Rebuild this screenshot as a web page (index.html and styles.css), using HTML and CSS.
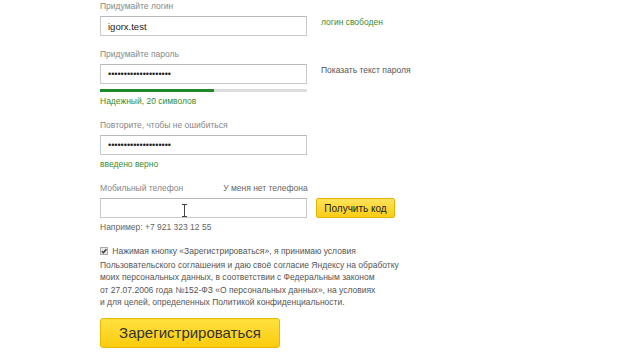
FILE: index.html
```html
<!DOCTYPE html>
<html lang="ru">
<head>
    <meta charset="UTF-8">
    <meta name="viewport" content="width=device-width, initial-scale=1.0">
    <title>Регистрация</title>
    <link rel="stylesheet" href="styles.css">
</head>
<body>
    <div class="form">
        <div class="field">
            <label class="label">Придумайте логин</label>
            <div class="row">
                <div class="input"><span class="value">igorx.test</span></div>
                <span class="side ok">логин свободен</span>
            </div>
        </div>

        <div class="field">
            <label class="label">Придумайте пароль</label>
            <div class="row">
                <div class="input"><span class="dots">••••••••••••••••••••</span></div>
                <span class="side">Показать текст пароля</span>
            </div>
            <div class="strength"><div class="strength-fill"></div></div>
            <p class="hint ok">Надежный, 20 символов</p>
        </div>

        <div class="field">
            <label class="label">Повторите, чтобы не ошибиться</label>
            <div class="row">
                <div class="input"><span class="dots">••••••••••••••••••••</span></div>
            </div>
            <p class="hint ok">введено верно</p>
        </div>

        <div class="field">
            <div class="label-row">
                <label class="label">Мобильный телефон</label>
                <span class="label no-phone">У меня нет телефона</span>
            </div>
            <div class="row">
                <div class="input phone">
                    <svg class="cursor" width="7" height="13" viewBox="0 0 7 13">
                        <path d="M1 0.5h5M1 12.5h5M3.5 0.5v12" stroke="#444" stroke-width="1" fill="none"/>
                    </svg>
                </div>
                <button class="btn-code">Получить код</button>
            </div>
            <p class="hint example">Например: +7 921 323 12 55</p>
        </div>

        <p class="agree">
            <span class="check">
                <svg width="8" height="8" viewBox="0 0 8 8">
                    <rect x="0.5" y="0.5" width="7" height="7" fill="#e9e9e9" stroke="#aaa"/>
                    <path d="M1.8 4.2l1.6 1.6 3-3.6" stroke="#333" stroke-width="1.4" fill="none"/>
                </svg>
            </span>
            Нажимая кнопку «Зарегистрироваться», я принимаю условия<br>
            Пользовательского соглашения и даю своё согласие Яндексу на обработку<br>
            моих персональных данных, в соответствии с Федеральным законом<br>
            от 27.07.2006 года №152-ФЗ «О персональных данных», на условиях<br>
            и для целей, определенных Политикой конфиденциальности.
        </p>

        <button class="btn-submit">Зарегистрироваться</button>
    </div>
</body>
</html>
```

FILE: styles.css
```css
* {
    margin: 0;
    padding: 0;
    box-sizing: border-box;
}

body {
    font-family: 'Liberation Sans', Arial, sans-serif;
    background-color: #fff;
    color: #333;
}

.form {
    padding-left: 100px;
}

.field {
    margin-bottom: 12px;
}

.label {
    display: block;
    font-size: 8.5px;
    line-height: 12px;
    color: #888;
    margin-bottom: 4px;
}

.label-row {
    display: flex;
}

.no-phone {
    margin-left: 40px;
    color: #666;
}

.row {
    display: flex;
    align-items: flex-start;
}

.input {
    position: relative;
    width: 207px;
    height: 20px;
    border: 1px solid #c9c9c9;
    border-top-color: #b8b8b8;
    background-color: #fff;
    display: flex;
    align-items: center;
    padding-left: 7px;
}

.value {
    font-size: 9.5px;
    color: #222;
}

.dots {
    font-size: 9px;
    color: #222;
}

.side {
    margin-left: 14px;
    font-size: 8.5px;
    line-height: 12px;
    color: #555;
}

.ok {
    color: #3d8b2f;
}

.strength {
    width: 207px;
    height: 3px;
    margin-top: 5px;
    background-color: #ddd;
}

.strength-fill {
    width: 55%;
    height: 100%;
    background-color: #1e8a2a;
}

.hint {
    font-size: 8.5px;
    line-height: 12px;
    margin-top: 3px;
}

.example {
    color: #666;
}

.cursor {
    position: absolute;
    left: 80px;
    top: 5px;
}

.btn-code {
    margin-left: 9px;
    width: 79px;
    height: 20px;
    font-family: inherit;
    font-size: 10px;
    color: #222;
    border: 1px solid #e2b600;
    border-radius: 2px;
    background: linear-gradient(#ffe35a, #fccb14);
    cursor: pointer;
}

.agree {
    margin-top: 11px;
    font-size: 8.5px;
    line-height: 12.5px;
    color: #555;
}

.check {
    display: inline-block;
    vertical-align: -1px;
    margin-right: 2px;
}

.btn-submit {
    margin-top: 9px;
    width: 180px;
    height: 30px;
    font-family: inherit;
    font-size: 15px;
    color: #333;
    border: 1px solid #e6b800;
    border-radius: 3px;
    background: linear-gradient(#ffe13f, #fbcb0e);
    cursor: pointer;
}
```
